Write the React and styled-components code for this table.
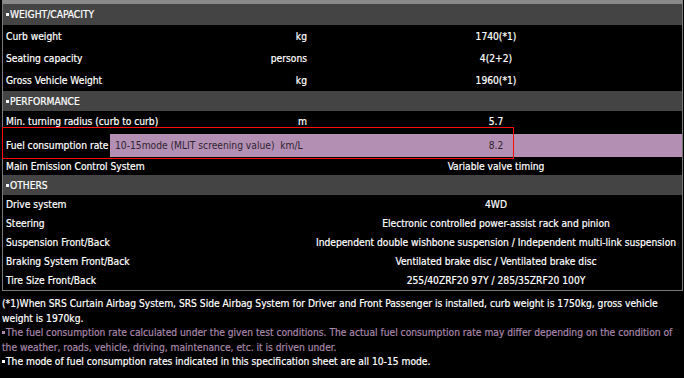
import React from "react";
import styled, { createGlobalStyle } from "styled-components";

const Global = createGlobalStyle`
  html, body {
    margin: 0;
    padding: 0;
    background: #000;
  }
  body {
    font-family: "DejaVu Sans Condensed", "DejaVu Sans", sans-serif;
    font-size: 10.2px;
    color: #fff;
    -webkit-text-stroke: 0.2px currentColor;
  }
`;

const Page = styled.div`
  width: 684px;
  height: 378px;
  overflow: hidden;
  background: #000;
`;

const SpecTable = styled.div`
  margin: 0 1px 0 2px;
  border: 1px solid #7a7a7a;
  border-top: 4px solid #8a8a8a;
`;

const Bullet = styled.span`
  display: inline-block;
  width: 3px;
  height: 3px;
  margin: 0 1px 0 0;
  background: currentColor;
  vertical-align: 2px;
`;

const SectionHeader = styled.div`
  height: ${(p) => p.$h}px;
  display: flex;
  align-items: center;
  padding-left: 3px;
  background: #444;
  color: #fff;
`;

const Row = styled.div`
  display: grid;
  grid-template-columns: 207px 100px 1fr;
  align-items: center;
  height: ${(p) => p.$h}px;
`;

const Label = styled.div`
  padding-left: 3px;
  white-space: nowrap;
`;

const Unit = styled.div`
  text-align: right;
  padding-right: 3px;
  white-space: nowrap;
`;

const Value = styled.div`
  text-align: center;
  white-space: nowrap;
`;

const FuelRow = styled.div`
  position: relative;
  display: grid;
  grid-template-columns: 107px 1fr;
  align-items: end;
  height: 25px;

  &::after {
    content: "";
    position: absolute;
    left: -1px;
    top: -5px;
    width: 512px;
    height: 32px;
    box-sizing: border-box;
    border: 1px solid #ff0a0a;
    pointer-events: none;
  }
`;

const FuelLabel = styled.div`
  padding-left: 3px;
  height: 23px;
  display: flex;
  align-items: center;
  white-space: nowrap;
`;

const Band = styled.div`
  height: 23px;
  display: grid;
  grid-template-columns: 200px 1fr;
  align-items: center;
  background: #b48fb4;
  color: #2e2430;
  -webkit-text-stroke: 0;
`;

const BandMode = styled.div`
  padding-left: 5px;
  white-space: pre;
`;

const Notes = styled.div`
  padding: 6px 0 0 2px;
  line-height: 14.5px;
`;

const Note = styled.div`
  color: ${(p) => (p.$accent ? "#a887aa" : "#fff")};
`;

const weight = [
  ["Curb weight", "kg", "1740(*1)"],
  ["Seating capacity", "persons", "4(2+2)"],
  ["Gross Vehicle Weight", "kg", "1960(*1)"],
];

const others = [
  ["Drive system", "", "4WD"],
  ["Steering", "", "Electronic controlled power-assist rack and pinion"],
  [
    "Suspension Front/Back",
    "",
    "Independent double wishbone suspension / Independent multi-link suspension",
  ],
  ["Braking System Front/Back", "", "Ventilated brake disc / Ventilated brake disc"],
  ["Tire Size Front/Back", "", "255/40ZRF20 97Y  / 285/35ZRF20 100Y"],
];

const SpecRow = ({ h, label, unit, value }) => (
  <Row $h={h}>
    <Label>{label}</Label>
    <Unit>{unit}</Unit>
    <Value>{value}</Value>
  </Row>
);

export default function App() {
  return (
    <Page>
      <Global />
      <SpecTable>
        <SectionHeader $h={21}>
          <Bullet />WEIGHT/CAPACITY
        </SectionHeader>
        {weight.map(([l, u, v]) => (
          <SpecRow key={l} h={22} label={l} unit={u} value={v} />
        ))}
        <SectionHeader $h={20}>
          <Bullet />PERFORMANCE
        </SectionHeader>
        <SpecRow h={21} label="Min. turning radius (curb to curb)" unit="m" value="5.7" />
        <FuelRow>
          <FuelLabel>Fuel consumption rate</FuelLabel>
          <Band>
            <BandMode>10-15mode (MLIT screening value)  km/L</BandMode>
            <Value>8.2</Value>
          </Band>
        </FuelRow>
        <SpecRow h={18} label="Main Emission Control System" unit="" value="Variable valve timing" />
        <SectionHeader $h={20}>
          <Bullet />OTHERS
        </SectionHeader>
        {others.map(([l, u, v]) => (
          <SpecRow key={l} h={19} label={l} unit={u} value={v} />
        ))}
      </SpecTable>
      <Notes>
        <Note>
          (*1)When SRS Curtain Airbag System, SRS Side Airbag System for Driver and Front
          Passenger is installed, curb weight is 1750kg, gross vehicle weight is 1970kg.
        </Note>
        <Note $accent>
          <Bullet />The fuel consumption rate calculated under the given test conditions. The
          actual fuel consumption rate may differ depending on the condition of the weather,
          roads, vehicle, driving, maintenance, etc. it is driven under.
        </Note>
        <Note>
          <Bullet />The mode of fuel consumption rates indicated in this specification sheet are
          all 10-15 mode.
        </Note>
      </Notes>
    </Page>
  );
}
